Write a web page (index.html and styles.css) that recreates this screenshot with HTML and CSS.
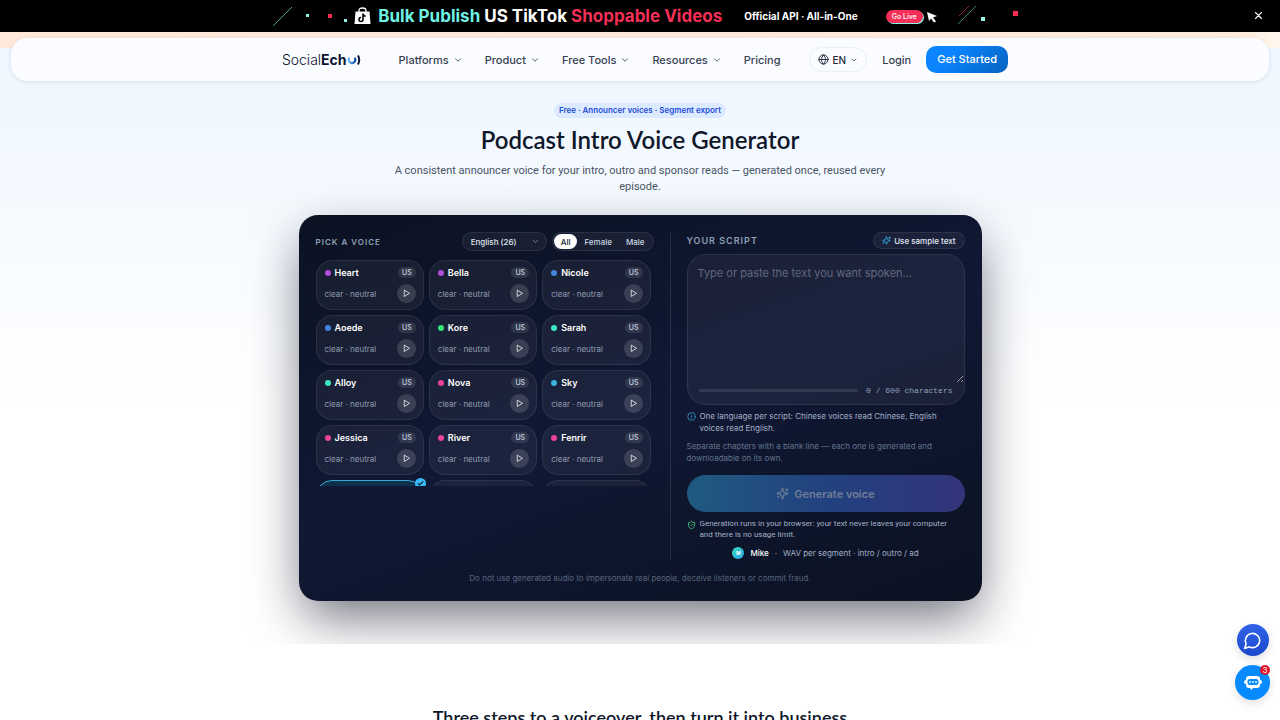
FILE: index.html
```
<!DOCTYPE html>
<html lang="en">
<head>
<meta charset="UTF-8">
<meta name="viewport" content="width=device-width, initial-scale=1.0">
<title>Podcast Intro Voice Generator</title>
<link rel="stylesheet" href="styles.css">
</head>
<body>

<!-- Shared icons -->
<svg class="sprite" aria-hidden="true">
    <symbol id="chevron" viewBox="0 0 24 24"><path d="m6 9 6 6 6-6"/></symbol>
    <symbol id="play" viewBox="0 0 24 24"><path d="M6 4v16l13-8z"/></symbol>
    <symbol id="sparkles" viewBox="0 0 24 24"><path d="M9.9 15.5A2 2 0 0 0 8.500 14.100l-6.100-1.600a.5.5 0 0 1 0-1l6.100-1.600A2 2 0 0 0 9.900 8.500l1.600-6.100a.5.5 0 0 1 1 0l1.600 6.100a2 2 0 0 0 1.400 1.400l6.100 1.600a.5.5 0 0 1 0 1l-6.100 1.600a2 2 0 0 0-1.400 1.400l-1.600 6.100a.5.5 0 0 1-1 0zM20 3v4M22 5h-4M4 17v2M5 18H3"/></symbol>
</svg>

<div class="banner">
    <svg class="banner-deco" width="82" height="32" viewBox="0 0 82 32">
        <path d="M1 26 20 7" stroke="#4b9c90"/>
        <path d="M34 14h3v3h-3zM72 19h3v3h-3z" fill="#8ff5e6"/>
        <path d="M56 14h4v4h-4z" fill="#fe2c55"/>
    </svg>
    <svg class="bag" width="17" height="18" viewBox="0 0 16 18">
        <path d="M4.500 5V3.500C4.500 1.500 6 1 8 1s3.500.5 3.500 2.500V5" fill="none" stroke="#fff" stroke-width="1.300"/>
        <path d="M1 4.500h14l1 12.500H0z" fill="#fff"/>
        <path d="M8.500 6.500v6a2 2 0 1 1-2-2M8.500 7c.3 1.500 1.300 2.200 2.700 2.300" fill="none" stroke="#000" stroke-width="1.600"/>
    </svg>
    <strong class="banner-title"><span class="cyan">Bulk Publish</span> US TikTok <span class="red">Shoppable Videos</span></strong>
    <span class="banner-note">Official API · All-in-One</span>
    <a class="go-live" href="#">Go Live</a>
    <svg class="banner-end" width="96" height="32" viewBox="0 0 96 32">
        <path d="M4 12l10 4-4 1.500 3 4-2 1-3-4-2 2.500z" fill="#fff"/>
        <path d="M35 24 53 6" stroke="#3f7d74"/><path d="M36 16 46 6" stroke="#8d2038"/>
        <path d="M58 17h4v4h-4z" fill="#9bf3ea"/><path d="M90 11h5v5h-5z" fill="#fe2c55"/>
    </svg>
    <button class="banner-close" aria-label="Close"><svg class="icon" width="9" height="9" viewBox="0 0 24 24"><path d="M4 4l16 16M20 4 4 20"/></svg></button>
</div>

<header class="header">
    <nav class="nav">
        <a class="logo" href="#"><span class="logo-thin">Social</span><b>Ech</b><svg width="14" height="12" viewBox="0 0 14 12">
            <defs><linearGradient id="ring" x1="0" y1="0" x2="1" y2="0"><stop offset="0" stop-color="#6db8fb"/><stop offset="1" stop-color="#0c4fae"/></linearGradient></defs>
            <path d="M2.500 3.800a3.200 3.200 0 1 0 5 0" fill="none" stroke="url(#ring)" stroke-width="2.200"/>
            <path d="M11 1.500q2.500 4.500 0 9" fill="none" stroke="#0a1433" stroke-width="2"/>
        </svg></a>
        <div class="menu">
            <a href="#">Platforms <svg class="icon" width="10" height="10"><use href="#chevron"/></svg></a>
            <a href="#">Product <svg class="icon" width="10" height="10"><use href="#chevron"/></svg></a>
            <a href="#">Free Tools <svg class="icon" width="10" height="10"><use href="#chevron"/></svg></a>
            <a href="#">Resources <svg class="icon" width="10" height="10"><use href="#chevron"/></svg></a>
            <a href="#">Pricing</a>
        </div>
        <div class="actions">
            <button class="lang"><svg class="icon" width="11" height="11" viewBox="0 0 24 24"><circle cx="12" cy="12" r="10"/><path d="M2 12h20M12 2c6 6 6 14 0 20M12 2c-6 6-6 14 0 20"/></svg>EN<svg class="icon" width="8" height="8"><use href="#chevron"/></svg></button>
            <a class="login" href="#">Login</a>
            <a class="get-started" href="#">Get Started</a>
        </div>
    </nav>
</header>

<main>
<section class="hero">
    <span class="tag">Free · Announcer voices · Segment export</span>
    <h1>Podcast Intro Voice Generator</h1>
    <p class="lead">A consistent announcer voice for your intro, outro and sponsor reads — generated once, reused every episode.</p>

    <div class="studio">
        <div class="columns">
            <div class="voices">
                <div class="panel-head">
                    <h2>Pick a voice</h2>
                    <div class="filters">
                        <div class="select-wrap">
                            <select aria-label="Language"><option>English (26)</option></select>
                            <svg class="icon" width="9" height="9"><use href="#chevron"/></svg>
                        </div>
                        <div class="segmented">
                            <button class="active">All</button>
                            <button>Female</button>
                            <button>Male</button>
                        </div>
                    </div>
                </div>
                <div class="voice-grid" id="voice_grid"></div>
            </div>

            <div class="script">
                <div class="panel-head script-head">
                    <h2><label for="script_text">Your script</label></h2>
                    <button class="sample"><svg class="icon" width="9" height="9"><use href="#sparkles"/></svg>Use sample text</button>
                </div>
                <div class="editor">
                    <textarea id="script_text" placeholder="Type or paste the text you want spoken..."></textarea>
                    <div class="counter">
                        <div class="track"></div>
                        <span>0 / 600 characters</span>
                    </div>
                </div>
                <p class="info"><svg class="icon" width="9" height="9" viewBox="0 0 24 24"><circle cx="12" cy="12" r="10"/><path d="M12 16v-4M12 8v.1"/></svg>One language per script: Chinese voices read Chinese, English voices read English.</p>
                <p class="hint">Separate chapters with a blank line — each one is generated and downloadable on its own.</p>
                <button class="generate" disabled><svg class="icon" width="13" height="13"><use href="#sparkles"/></svg>Generate voice</button>
                <p class="privacy"><svg class="icon" width="9" height="10" viewBox="0 0 24 24"><path d="M20 13c0 5-3.500 7.500-8 9-4.500-1.500-8-4-8-9V6c3 0 6-1.500 8-4 2 2.500 5 4 8 4z"/><path d="m9 12 2 2 4-4"/></svg>Generation runs in your browser: your text never leaves your computer and there is no usage limit.</p>
                <div class="summary">
                    <span class="avatar">M</span><b>Mike</b><i>·</i><span>WAV per segment · intro / outro / ad</span>
                </div>
            </div>
        </div>
        <p class="disclaimer">Do not use generated audio to impersonate real people, deceive listeners or commit fraud.</p>
    </div>
</section>

<section class="steps">
    <h2>Three steps to a voiceover, then turn it into business</h2>
</section>
</main>

<div class="floating">
    <button class="chat" aria-label="Chat"><svg class="icon" width="19" height="19" viewBox="0 0 24 24"><path d="M7.900 20A9 9 0 1 0 4 16.100L2 22z"/></svg></button>
    <button class="bot" aria-label="Assistant">
        <svg width="18" height="16" viewBox="0 0 18 16"><path d="M5 1h8q3 0 3 3v1q2 0 2 2t-2 2v1q0 3-3 3H9l-1.500 2L6 13H5q-3 0-3-3V9Q0 9 0 7t2-2V4q0-3 3-3z" fill="#fff"/><rect x="3.500" y="4" width="11" height="6" rx="2.500" fill="#078afe"/><path d="M6 7h0M9 7h0M12 7h0" stroke="#fff" stroke-width="1.800" stroke-linecap="round"/></svg>
        <span class="count">3</span>
    </button>
</div>

<script>
var voices = [
    ["Heart", "purple"], ["Bella", "purple"], ["Nicole", "blue"],
    ["Aoede", "blue"], ["Kore", "green"], ["Sarah", "teal"],
    ["Alloy", "teal"], ["Nova", "pink"], ["Sky", "sky"],
    ["Jessica", "pink"], ["River", "pink"], ["Fenrir", "pink"],
    ["Mike", "sky"], ["Liam", "blue"], ["Echo", "green"]
];
var grid = document.getElementById("voice_grid");

voices.forEach(function(voice) {
    var card = document.createElement("div");
    card.className = "voice";
    card.innerHTML = `
        <div class="voice-row">
            <span class="dot ${voice[1]}"></span>
            <span class="name">${voice[0]}</span>
            <span class="region">US</span>
        </div>
        <div class="voice-row">
            <span class="style">clear · neutral</span>
            <button class="play" aria-label="Play ${voice[0]}"><svg class="icon" width="9" height="9"><use href="#play"/></svg></button>
        </div>
    `;
    // Mark the chosen voice
    if (voice[0] === "Mike") {
        card.classList.add("selected");
        card.innerHTML += `<span class="check"><svg class="icon" width="7" height="7" viewBox="0 0 24 24"><path d="M20 6 9 17l-5-5"/></svg></span>`;
    }
    grid.appendChild(card);
});
</script>

</body>
</html>
```

FILE: styles.css
```
* {
    box-sizing: border-box;
}

body {
    font-family: Inter, "Liberation Sans", sans-serif;
    margin: 0;
    background-color: #ffffff;
    color: #0f172a;
    height: 100vh;
    overflow: hidden;
}

h1, h2, p {
    margin: 0;
}

button, select, textarea {
    font-family: inherit;
    border: none;
    margin: 0;
    padding: 0;
    cursor: pointer;
}

a {
    color: inherit;
    text-decoration: none;
}

.sprite {
    position: absolute;
    width: 0;
    height: 0;
}

.icon {
    fill: none;
    stroke: currentColor;
    stroke-width: 2;
    stroke-linecap: round;
    stroke-linejoin: round;
    flex-shrink: 0;
}

/* Top banner */
.banner {
    position: relative;
    display: flex;
    align-items: center;
    justify-content: center;
    height: 32px;
    padding-left: 11px;
    background-color: #000000;
    color: #ffffff;
}

.banner-title {
    font-size: 17px;
    font-weight: 700;
    margin-left: 7px;
    white-space: nowrap;
}

.cyan {
    color: #6df2e4;
}

.red {
    color: #f52f57;
}

.banner-note {
    font-size: 10px;
    font-weight: 700;
    margin-left: 22px;
    white-space: nowrap;
}

.go-live {
    margin-left: 28px;
    padding: 0 6px;
    border-radius: 8px;
    background-color: #f52f57;
    box-shadow: 1px 1px 0 #8ff5e6;
    font-size: 7px;
    font-weight: 500;
    line-height: 13px;
    white-space: nowrap;
}

.banner-close {
    position: absolute;
    right: 17px;
    top: 11px;
    display: flex;
    background: none;
    color: #ffffff;
}

.banner-close .icon {
    stroke-width: 3;
}

/* Header */
.header {
    background: linear-gradient(90deg, #ffe8da, #fdebdf 97%, #fff7ec);
    height: 16px;
    padding: 6px 11px 0;
}

.nav {
    position: relative;
    z-index: 2;
    display: flex;
    align-items: center;
    justify-content: center;
    height: 43px;
    padding-left: 10px;
    border-radius: 16px;
    background-color: #fafcff;
    box-shadow: 0 1px 4px rgba(15, 23, 42, 0.1);
    font-size: 11px;
    font-weight: 500;
    color: #364153;
}

.logo {
    display: flex;
    align-items: center;
    font-size: 14px;
    color: #0a1433;
}

.logo-thin {
    font-weight: 300;
}

.menu {
    display: flex;
    gap: 22px;
    margin-left: 38px;
}

.menu a {
    display: flex;
    align-items: center;
    gap: 4px;
}

.actions {
    display: flex;
    align-items: center;
    gap: 15px;
    margin-left: 28px;
}

.lang {
    display: flex;
    align-items: center;
    gap: 4px;
    height: 25px;
    padding: 0 8px;
    border: 1px solid #eceff4;
    border-radius: 13px;
    background: none;
    font-size: 10px;
    font-weight: 500;
    color: #1e2939;
}

.get-started {
    padding: 0 11px;
    border-radius: 10px;
    background: linear-gradient(135deg, #0a84ff 30%, #0663bf);
    color: #ffffff;
    line-height: 27px;
}

/* Hero */
.hero {
    display: flex;
    flex-direction: column;
    align-items: center;
    padding: 55px 20px 43px;
    overflow: hidden;
    background: linear-gradient(#eef6ff, #ffffff 60%);
}

.tag {
    padding: 0 5px;
    border-radius: 8px;
    background-color: #dbeafe;
    color: #1d4ed8;
    font-size: 8px;
    font-weight: 600;
    line-height: 15px;
}

h1 {
    margin-top: 6px;
    font-family: Lato, Inter, sans-serif;
    font-size: 24px;
    font-weight: 600;
    line-height: 32px;
}

.lead {
    max-width: 512px;
    margin-top: 7px;
    font-family: Roboto, Inter, sans-serif;
    font-size: 11px;
    line-height: 16px;
    text-align: center;
    color: #4a5565;
}

.studio {
    width: 100%;
    max-width: 683px;
    margin-top: 20px;
    padding: 17px;
    border-radius: 19px;
    background: linear-gradient(160deg, #0b1222, #101834 50%, #0b1222);
    box-shadow: 0 20px 52px -5px rgba(11, 14, 34, 0.6);
    color: #ffffff;
}

.columns {
    display: flex;
}

.voices {
    flex: 1;
    padding-right: 16px;
    border-right: 1px solid rgba(255, 255, 255, 0.1);
}

.script {
    width: 294px;
    padding-left: 16px;
}

.panel-head {
    display: flex;
    align-items: center;
    justify-content: space-between;
    height: 19px;
}

.panel-head h2 {
    font-size: 8px;
    font-weight: 600;
    letter-spacing: 1px;
    text-transform: uppercase;
    color: #90a1b9;
}

.filters {
    display: flex;
    gap: 5px;
}

.select-wrap {
    position: relative;
    display: flex;
}

.select-wrap select {
    appearance: none;
    width: 85px;
    height: 19px;
    padding: 0 8px;
    border: 1px solid rgba(255, 255, 255, 0.08);
    border-radius: 10px;
    background-color: rgba(255, 255, 255, 0.05);
    color: #e2e8f0;
    font-size: 8px;
    font-weight: 500;
}

.select-wrap .icon {
    position: absolute;
    right: 7px;
    top: 5px;
    color: #90a1b9;
}

.segmented {
    display: flex;
    padding: 1px;
    border: 1px solid rgba(255, 255, 255, 0.08);
    border-radius: 10px;
    background-color: rgba(255, 255, 255, 0.05);
}

.segmented button {
    padding: 0 7px;
    border-radius: 8px;
    background: none;
    color: #cad5e2;
    font-size: 8px;
    font-weight: 500;
}

.segmented .active {
    background-color: #ffffff;
    color: #0f172b;
}

.voice-grid {
    display: grid;
    grid-template-columns: repeat(3, 1fr);
    grid-auto-rows: 50px;
    gap: 5px;
    height: 226px;
    margin-top: 9px;
    padding-right: 3px;
    overflow-y: auto;
    scrollbar-width: none;
}

.voice {
    position: relative;
    display: flex;
    flex-direction: column;
    justify-content: space-between;
    padding: 6px 7px 6px 8px;
    border: 1px solid rgba(255, 255, 255, 0.08);
    border-radius: 16px;
    background-color: rgba(255, 255, 255, 0.05);
}

.voice-row {
    display: flex;
    align-items: center;
    gap: 4px;
}

.dot {
    width: 6px;
    height: 6px;
    border-radius: 50%;
}

.purple { background-color: #b44ddb; }
.blue { background-color: #4485e0; }
.green { background-color: #38e07b; }
.teal { background-color: #3ce8bf; }
.pink { background-color: #eb4399; }
.sky { background-color: #38b6e0; }

.name {
    flex: 1;
    font-size: 9px;
    font-weight: 600;
}

.region {
    padding: 0 4px;
    border-radius: 6px;
    background-color: rgba(255, 255, 255, 0.1);
    color: #cad5e2;
    font-size: 7px;
    font-weight: 500;
    line-height: 11px;
}

.style {
    flex: 1;
    color: #919cb0;
    font-size: 8px;
}

.play {
    display: flex;
    align-items: center;
    justify-content: center;
    width: 19px;
    height: 19px;
    border-radius: 50%;
    background-color: rgba(255, 255, 255, 0.14);
    color: #ffffff;
}

.voice.selected {
    border-color: #3aa7d4;
    background-color: #0d304d;
}

.check {
    position: absolute;
    right: -3px;
    top: -3px;
    display: flex;
    align-items: center;
    justify-content: center;
    width: 11px;
    height: 11px;
    border-radius: 50%;
    background-color: #38bdf8;
    color: #0f172b;
}

.check .icon {
    stroke-width: 4;
}

/* Script panel */
.script-head {
    height: 17px;
}

.script-head h2 {
    font-size: 9px;
}

.sample {
    display: flex;
    align-items: center;
    gap: 3px;
    height: 17px;
    padding: 0 8px;
    border: 1px solid rgba(255, 255, 255, 0.08);
    border-radius: 9px;
    background-color: rgba(255, 255, 255, 0.05);
    color: #e2e8f0;
    font-size: 8px;
    font-weight: 500;
}

.sample .icon {
    color: #38bdf8;
}

.editor {
    margin-top: 5px;
    border: 1px solid rgba(255, 255, 255, 0.08);
    border-radius: 19px;
    background-color: rgba(255, 255, 255, 0.05);
    overflow: hidden;
}

.editor textarea {
    display: block;
    width: 100%;
    height: 128px;
    padding: 10px;
    background: none;
    color: #ffffff;
    font-size: 11px;
    line-height: 16px;
    outline: none;
    resize: vertical;
}

.editor textarea::placeholder {
    color: #62697f;
}

.counter {
    display: flex;
    align-items: center;
    gap: 8px;
    height: 21px;
    padding: 0 11px 6px;
    color: #90a1b9;
    font-family: "Liberation Mono", monospace;
    font-size: 8px;
}

.track {
    flex: 1;
    height: 3px;
    border-radius: 2px;
    background-color: rgba(255, 255, 255, 0.1);
}

.info, .hint {
    font-size: 8px;
    line-height: 12px;
}

.info, .privacy {
    display: flex;
    gap: 4px;
    color: #a3b1c6;
}

.info {
    margin-top: 5px;
    padding-right: 16px;
}

.info .icon {
    margin-top: 2px;
    color: #38a8dc;
}

.hint {
    margin-top: 6px;
    color: #62748e;
}

.generate {
    display: flex;
    align-items: center;
    justify-content: center;
    gap: 5px;
    width: 100%;
    height: 37px;
    margin-top: 11px;
    border-radius: 19px;
    background: linear-gradient(90deg, #205a80, #22417f 50%, #33347a);
    color: #717d97;
    font-size: 11px;
    font-weight: 600;
}

.privacy {
    margin-top: 6px;
    padding-right: 8px;
    font-family: Roboto, Inter, sans-serif;
    font-size: 8px;
    line-height: 11px;
}

.privacy .icon {
    margin-top: 2px;
    color: #4ade80;
}

.summary {
    display: flex;
    align-items: center;
    justify-content: center;
    gap: 6px;
    margin-top: 7px;
    color: #a3b1c6;
    font-size: 8px;
}

.summary b {
    color: #ffffff;
    font-weight: 500;
}

.avatar {
    width: 12px;
    border-radius: 50%;
    background: linear-gradient(135deg, #38dec0, #2b9fe6);
    color: #ffffff;
    font-size: 5px;
    font-weight: 700;
    line-height: 12px;
    text-align: center;
}

.disclaimer {
    margin-top: 13px;
    color: #56657d;
    font-size: 8px;
    line-height: 12px;
    text-align: center;
}

/* Steps */
.steps {
    padding-top: 60px;
    text-align: center;
}

.steps h2 {
    font-family: Lato, Inter, sans-serif;
    font-size: 18px;
    font-weight: 600;
    line-height: 26px;
}

/* Floating buttons */
.floating {
    position: fixed;
    right: 10px;
    bottom: 20px;
    display: flex;
    flex-direction: column;
    align-items: center;
    gap: 9px;
}

.floating button {
    display: flex;
    align-items: center;
    justify-content: center;
    border-radius: 50%;
    color: #ffffff;
    box-shadow: 0 3px 8px rgba(15, 23, 42, 0.14);
}

.chat {
    width: 32px;
    height: 32px;
    background: linear-gradient(#2f62e8, #1c49cc);
}

.bot {
    position: relative;
    width: 35px;
    height: 35px;
    background-color: #078afe;
}

.count {
    position: absolute;
    right: 0;
    top: 0;
    width: 10px;
    border-radius: 5px;
    background-color: #e0162b;
    font-size: 8px;
    line-height: 10px;
}
```
